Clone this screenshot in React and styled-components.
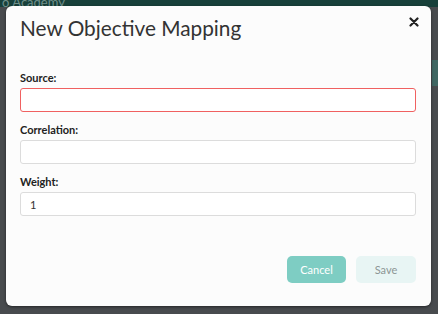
import React from 'react'
import styled, { createGlobalStyle } from 'styled-components'

const GlobalStyle = createGlobalStyle`
  html, body {
    margin: 0;
    padding: 0;
    width: 438px;
    height: 314px;
    overflow: hidden;
    font-family: "Lato", "Open Sans", sans-serif;
  }
`;

const Backdrop = styled.div`
  position: relative;
  width: 438px;
  height: 314px;
  background: #484b4e;
  overflow: hidden;
`;

const TopBar = styled.div`
  height: 7px;
  background: #17403a;
  color: #6f8f8a;
  font-size: 13px;
  line-height: 4px;
  padding-left: 2px;
  overflow: hidden;
`;

const SideBlock = styled.div`
  position: absolute;
  right: 0;
  top: 60px;
  width: 6px;
  height: 26px;
  background: #3f6662;
`;

const Modal = styled.div`
  position: absolute;
  left: 6px;
  top: 6px;
  width: 425px;
  height: 300px;
  box-sizing: border-box;
  background: #fcfcfc;
  border-radius: 6px;
  box-shadow: 0 1px 3px rgba(0, 0, 0, 0.5);
  padding: 10px 15px 0 14px;
  display: flex;
  flex-direction: column;
`;

const Header = styled.div`
  display: flex;
  justify-content: space-between;
  align-items: flex-start;
`;

const Title = styled.h1`
  margin: 0;
  font-family: "Lato", sans-serif;
  font-weight: 400;
  font-size: 20.8px;
  line-height: 24px;
  color: #333;
`;

const Close = styled.button`
  border: 0;
  background: none;
  padding: 0;
  margin: 1px -3px 0 0;
  width: 10px;
  height: 10px;
  display: flex;
  cursor: pointer;
`;

const Form = styled.div`
  margin-top: 31px;
  display: flex;
  flex-direction: column;
`;

const Label = styled.label`
  font-size: 11px;
  font-weight: 700;
  color: #222;
  line-height: 14px;
  margin-bottom: 3px;
`;

const Input = styled.input`
  box-sizing: border-box;
  width: 100%;
  height: 24px;
  border: 1px solid ${(p) => (p.$error ? '#f06161' : '#dcdcdc')};
  border-radius: 3px;
  background: #fff;
  font-family: "Lato", sans-serif;
  font-size: 11px;
  color: #333;
  padding: 0 9px;
  margin-bottom: 11px;
  outline: none;
`;

const Footer = styled.div`
  margin-top: 29px;
  display: flex;
  justify-content: flex-end;
  gap: 10px;
`;

const Button = styled.button`
  width: ${(p) => (p.$primary ? '59px' : '60px')};
  height: 27px;
  border: 0;
  border-radius: 5px;
  font-family: "Lato", sans-serif;
  font-size: 11px;
  background: ${(p) => (p.$primary ? '#7ecdc3' : '#e8f5f4')};
  color: ${(p) => (p.$primary ? '#fff' : '#8d9594')};
  cursor: pointer;
`;

export default function App() {
  return (
    <>
      <GlobalStyle />
      <Backdrop>
        <TopBar>o Academy</TopBar>
        <SideBlock />
        <Modal>
          <Header>
            <Title>New Objective Mapping</Title>
            <Close aria-label="close">
              <svg width="10" height="10" viewBox="0 0 10 10">
                <path d="M1.5 1.5 L8.5 8.5 M8.5 1.5 L1.5 8.5" stroke="#222" strokeWidth="2.2" strokeLinecap="round" />
              </svg>
            </Close>
          </Header>
          <Form>
            <Label>Source:</Label>
            <Input $error />
            <Label>Correlation:</Label>
            <Input />
            <Label>Weight:</Label>
            <Input defaultValue="1" />
          </Form>
          <Footer>
            <Button $primary>Cancel</Button>
            <Button>Save</Button>
          </Footer>
        </Modal>
      </Backdrop>
    </>
  )
}
